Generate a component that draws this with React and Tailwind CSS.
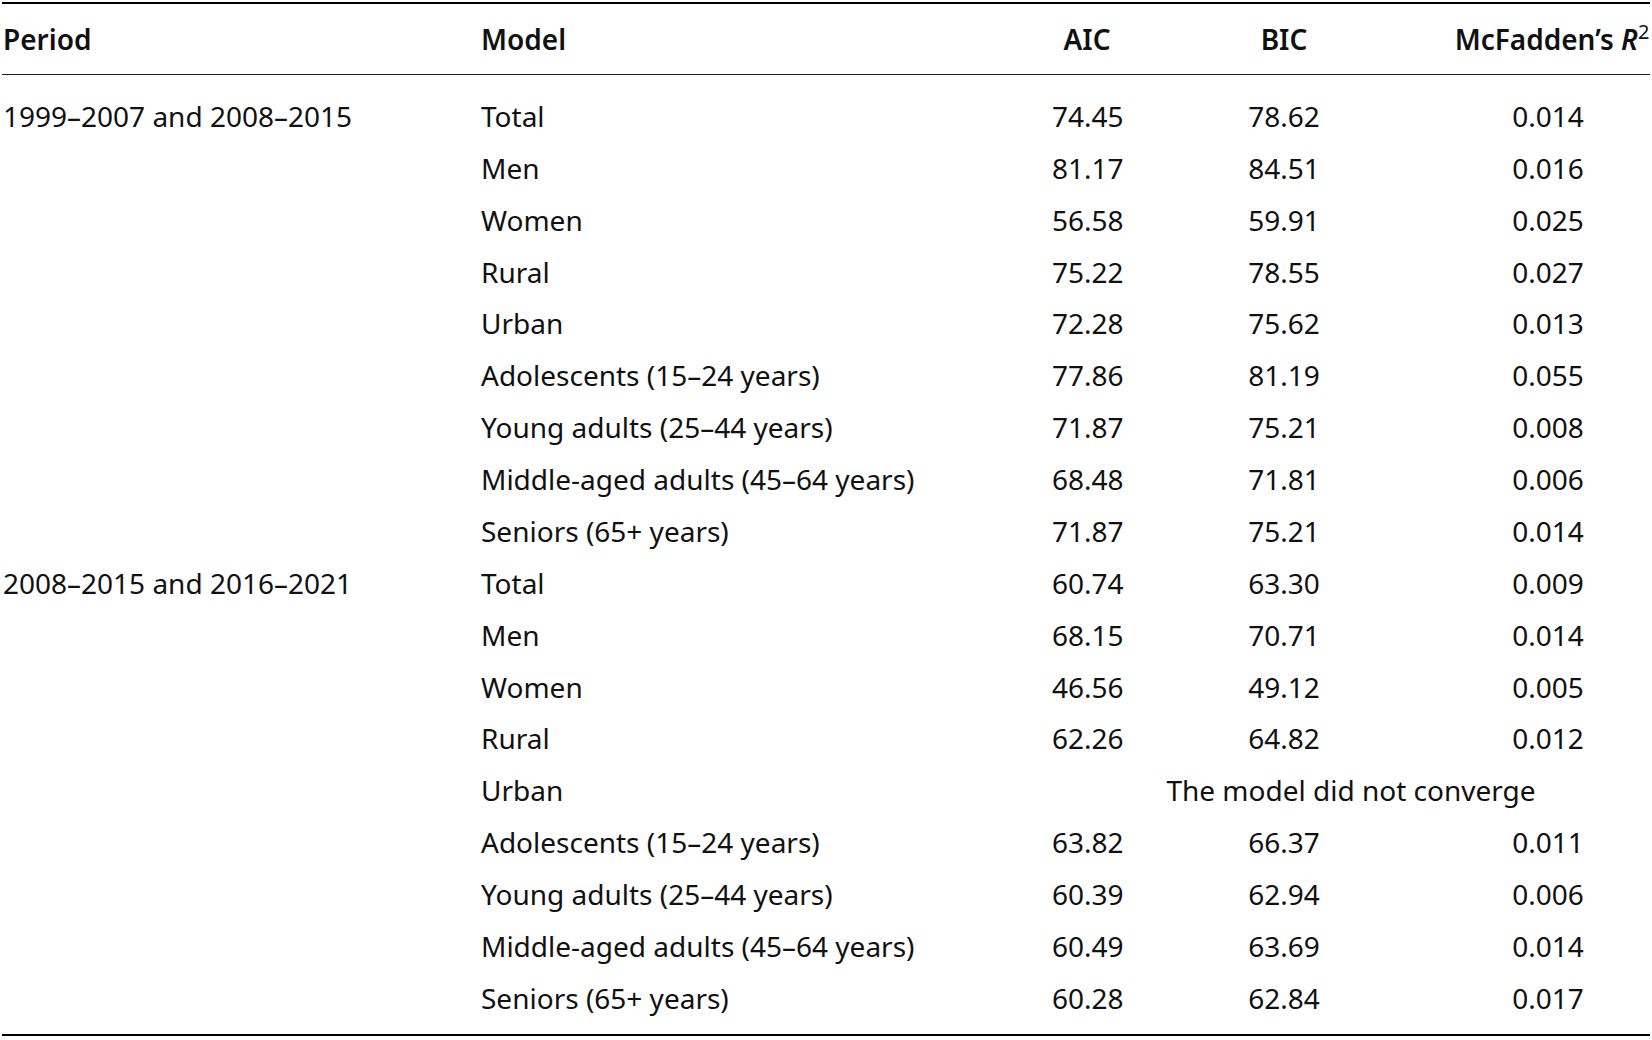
const rows = [
  ["1999–2007 and 2008–2015", "Total", "74.45", "78.62", "0.014"],
  ["", "Men", "81.17", "84.51", "0.016"],
  ["", "Women", "56.58", "59.91", "0.025"],
  ["", "Rural", "75.22", "78.55", "0.027"],
  ["", "Urban", "72.28", "75.62", "0.013"],
  ["", "Adolescents (15–24 years)", "77.86", "81.19", "0.055"],
  ["", "Young adults (25–44 years)", "71.87", "75.21", "0.008"],
  ["", "Middle-aged adults (45–64 years)", "68.48", "71.81", "0.006"],
  ["", "Seniors (65+ years)", "71.87", "75.21", "0.014"],
  ["2008–2015 and 2016–2021", "Total", "60.74", "63.30", "0.009"],
  ["", "Men", "68.15", "70.71", "0.014"],
  ["", "Women", "46.56", "49.12", "0.005"],
  ["", "Rural", "62.26", "64.82", "0.012"],
  ["", "Urban", null, null, null],
  ["", "Adolescents (15–24 years)", "63.82", "66.37", "0.011"],
  ["", "Young adults (25–44 years)", "60.39", "62.94", "0.006"],
  ["", "Middle-aged adults (45–64 years)", "60.49", "63.69", "0.014"],
  ["", "Seniors (65+ years)", "60.28", "62.84", "0.017"],
];

const grid = "grid grid-cols-[479px_571px_70px_324px_1fr] items-center";

export default function App() {
  return (
    <div className="w-[1652px] h-[1040px] bg-white px-[2px] pt-[2px] text-[#111] font-['Noto_Sans',sans-serif] text-[28px] leading-none">
      <div className="border-t-2 border-b-2 border-black">
        {/* Header */}
        <div className={`${grid} h-[71px] border-b border-[#222] font-semibold`}>
          <div className="pl-px">Period</div>
          <div>Model</div>
          <div className="text-center">AIC</div>
          <div className="text-center">BIC</div>
          <div className="text-center whitespace-nowrap pl-[8px]">
            McFadden’s <span className="italic">R</span>
            <span className="relative -top-[11px] text-[20px] font-normal">2</span>
          </div>
        </div>

        {/* Body */}
        <div className="pt-[15px] pb-[10px]">
          {rows.map((r, i) => (
            <div key={i} className={`${grid} h-[51.88px]`}>
              <div className="pl-px whitespace-nowrap">{r[0]}</div>
              <div className="whitespace-nowrap">{r[1]}</div>
              {r[2] === null ? (
                <div className="col-span-3 text-center">The model did not converge</div>
              ) : (
                <>
                  <div className="text-center">{r[2]}</div>
                  <div className="text-center">{r[3]}</div>
                  <div className="text-center">{r[4]}</div>
                </>
              )}
            </div>
          ))}
        </div>
      </div>
    </div>
  );
}
